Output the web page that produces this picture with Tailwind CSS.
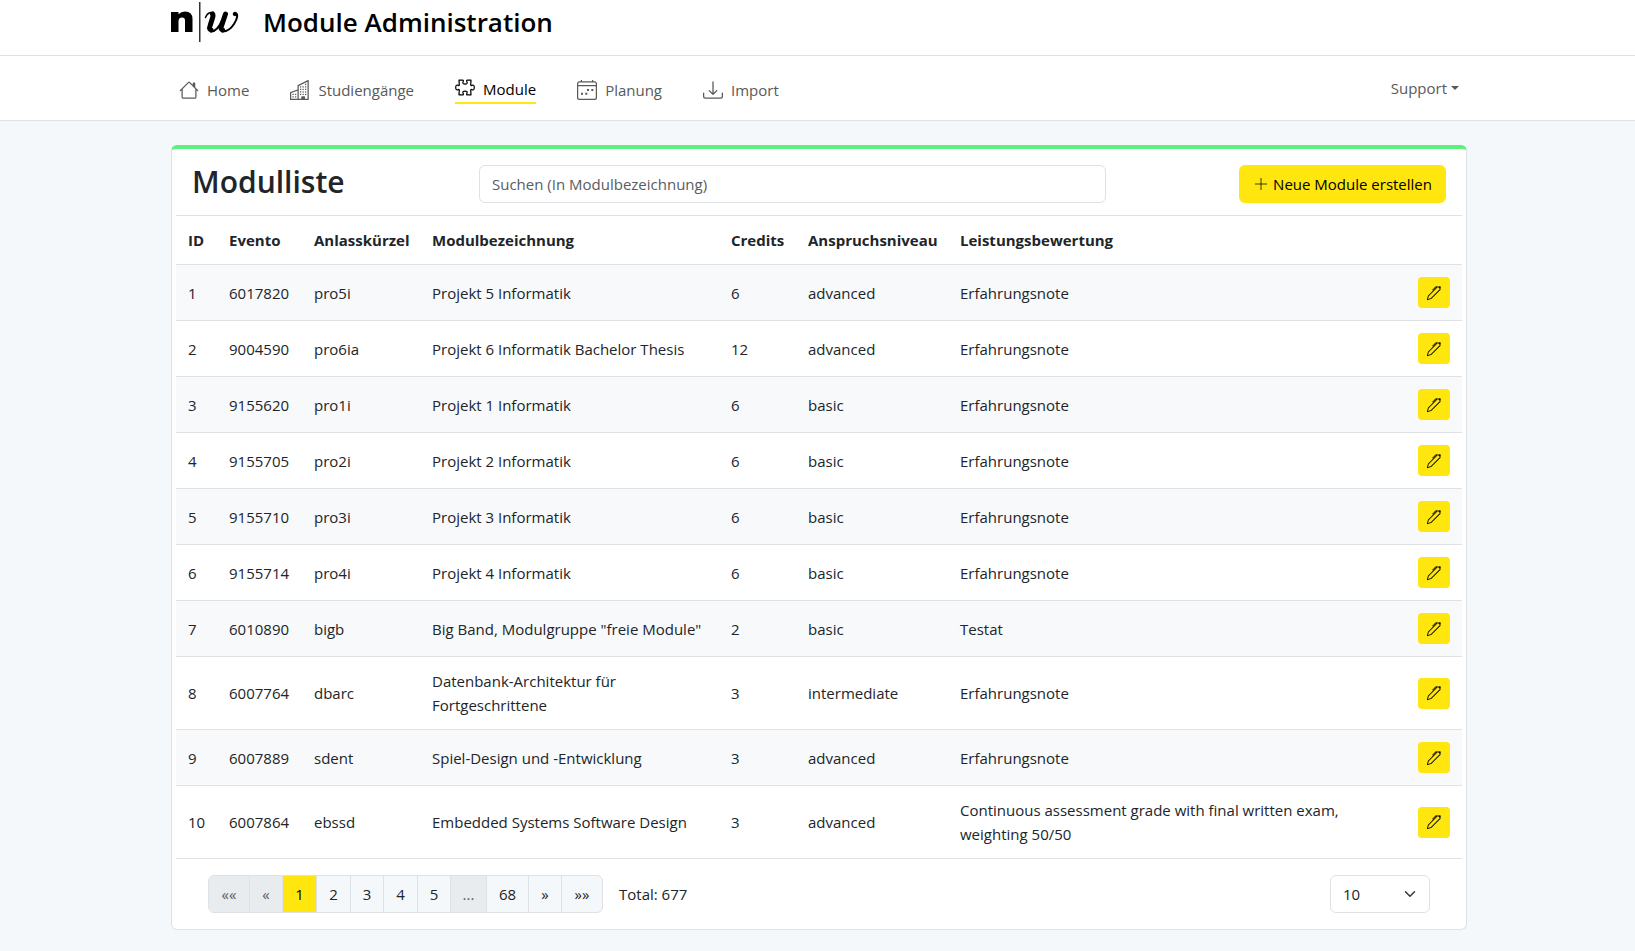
<!DOCTYPE html>
<html lang="de">
<head>
<meta charset="utf-8">
<meta name="viewport" content="width=device-width, initial-scale=1">
<title>Module Administration</title>
<script src="https://cdn.jsdelivr.net/npm/@tailwindcss/browser@4"></script>
</head>
<body class="min-h-screen bg-[#f4f8fb] font-['Segoe_UI','Open_Sans',sans-serif] text-[15px] leading-6 text-[#212529]">
<svg class="hidden" aria-hidden="true">
  <symbol id="pen" viewBox="0 0 16 16"><path d="m13.498.795.149-.149a1.207 1.207 0 1 1 1.707 1.708l-.149.148a1.5 1.5 0 0 1-.059 2.059L4.854 14.854a.5.5 0 0 1-.233.131l-4 1a.5.5 0 0 1-.606-.606l1-4a.5.5 0 0 1 .131-.232l9.642-9.642a.5.5 0 0 0-.642.056L6.854 4.854a.5.5 0 1 1-.708-.708L9.44.854A1.5 1.5 0 0 1 11.5.796a1.5 1.5 0 0 1 1.998-.001zm-.644.766a.5.5 0 0 0-.707 0L1.95 11.756l-.764 3.057 3.057-.764L14.44 3.854a.5.5 0 0 0 0-.708l-1.585-1.585z"/></symbol>
</svg>

<header class="border-b border-[#dee2e6] bg-white pl-[3px]">
  <div class="mx-auto flex h-[55px] max-w-[1296px] gap-6">
    <svg class="h-[42px] w-[68px] shrink-0" viewBox="0 0 68 42" role="img" aria-label="n|w">
      <path d="M0 12h7.500v2.300q2.500-2.700 6.500-2.700q7.500 0 7.500 7.500V32H14V20.500q0-3-3-3q-3.500 0-3.500 4V32H0z"/>
      <path d="M28 2h1.500v40H28z" fill="#333"/>
      <g fill="none" stroke="#000" stroke-linecap="round" stroke-linejoin="round">
        <path d="M34.500 17.500q2-5 6-5" stroke-width="1.500"/>
        <path d="M41.500 14q1 1.500 0 4l-2.500 8q-1.200 3.500 1 4" stroke-width="5"/>
        <path d="M40 31.500q6.500 0 11.500-12" stroke-width="2"/>
        <path d="m54.500 14-4 12q-1.200 3.500 1 4" stroke-width="5"/>
        <path d="M51.500 31.500q6.500.2 11.500-7.500 5.500-9 1.500-10.800" stroke-width="2"/>
        <circle cx="64" cy="14" r="1.800" fill="#000"/>
      </g>
    </svg>
    <h1 class="text-[26px] leading-[45px] font-semibold text-black">Module Administration</h1>
  </div>
</header>

<div class="border-b border-[#dee2e6] bg-white pl-[3px]">
  <nav class="mx-auto flex h-16 max-w-[1296px] items-start justify-between pr-2 pl-2 pt-5 text-[#595959]">
    <ul class="flex gap-[41px]">
      <li><a href="#" class="flex items-center gap-2 py-[2px]">
        <svg class="size-5" viewBox="0 0 16 16" fill="currentColor"><path d="M8.707 1.500a1 1 0 0 0-1.414 0L.646 8.146a.5.5 0 0 0 .708.708L2 8.207V13.500A1.500 1.500 0 0 0 3.500 15h9a1.500 1.500 0 0 0 1.500-1.500V8.207l.646.647a.5.5 0 0 0 .708-.708L13 5.793V2.500a.5.5 0 0 0-.5-.5h-1a.5.5 0 0 0-.5.5v1.293zM13 7.207V13.500a.5.5 0 0 1-.5.5h-9a.5.5 0 0 1-.5-.5V7.207l5-5z"/></svg>Home</a></li>
      <li><a href="#" class="flex items-center gap-2 py-[2px]">
        <svg class="size-5" viewBox="0 0 16 16" fill="currentColor"><path fill-rule="evenodd" d="M14.763.075A.5.5 0 0 1 15 .5v15a.5.5 0 0 1-.5.5h-14a.5.5 0 0 1-.5-.5V10a.5.5 0 0 1 .342-.474L6 7.640V4.500a.5.5 0 0 1 .276-.447l8-4a.5.5 0 0 1 .487.022M6 8.694 1 10.360V15h5zM7 15h2v-1.500a.5.5 0 0 1 .5-.5h2a.5.5 0 0 1 .5.5V15h2V1.309l-7 3.500z"/><path d="M2 11h1v1H2zm2 0h1v1H4zm-2 2h1v1H2zm2 0h1v1H4zm4-4h1v1H8zm2 0h1v1h-1zm-2 2h1v1H8zm2 0h1v1h-1zm2-2h1v1h-1zm0 2h1v1h-1zM8 7h1v1H8zm2 0h1v1h-1zm2 0h1v1h-1zM8 5h1v1H8zm2 0h1v1h-1zm2 0h1v1h-1zm0-2h1v1h-1z"/></svg>Studiengänge</a></li>
      <li><a href="#" aria-current="page" class="flex items-center gap-2 border-b-2 border-[#ffe60f] pt-px pb-px text-black">
        <svg class="size-5" viewBox="0 0 20 20" fill="none" stroke="currentColor" stroke-width="1.250" stroke-linejoin="round"><path d="M4 1.200h3.600q1 0 .7 1-.8 1.400-.3 2.100.6.700 2 .7t2-.7q.5-.7-.3-2.100-.3-1 .7-1H16L15.700 5.800q.1 1 1 .6 2.600-1.100 2.600 2.100t-2.600 2.100q-.9-.4-1 .6L16 15.800h-3.600q-1 0-.7-1 .8-1.400.3-2.100-.6-.7-2-.7t-2 .7q-.5.700.3 2.100.3 1-.7 1H4l.3-4.600q-.1-1-1-.6Q.7 11.700.7 8.500t2.600-2.100q.9.400 1-.6z"/></svg>Module</a></li>
      <li><a href="#" class="flex items-center gap-2 py-[2px]">
        <svg class="size-5" viewBox="0 0 20 20" fill="none" stroke="currentColor" stroke-width="1.250"><rect x=".6" y="1.900" width="18.800" height="17.500" rx="2"/><path d="M1 5.600h18M4.400 0v2M15.600 0v2"/><path d="M4 13.800h2m2.300 0h2M10 10h2m2.300 0h2" stroke-width="2"/></svg>Planung</a></li>
      <li><a href="#" class="flex items-center gap-2 py-[2px]">
        <svg class="size-5" viewBox="0 0 16 16" fill="currentColor"><path d="M.5 9.900a.5.5 0 0 1 .5.5v2.500a1 1 0 0 0 1 1h12a1 1 0 0 0 1-1v-2.500a.5.5 0 0 1 1 0v2.500a2 2 0 0 1-2 2H2a2 2 0 0 1-2-2v-2.500a.5.5 0 0 1 .5-.5"/><path d="M7.646 11.854a.5.5 0 0 0 .708 0l3-3a.5.5 0 0 0-.708-.708L8.500 10.293V1.500a.5.5 0 0 0-1 0v8.793L5.354 8.146a.5.5 0 1 0-.708.708z"/></svg>Import</a></li>
    </ul>
    <button type="button" class="flex items-center gap-1">Support<span class="border-x-4 border-t-4 border-x-transparent border-t-[#595959]"></span></button>
  </nav>
</div>

<main class="py-6 pl-[3px]">
  <section class="mx-auto max-w-[1296px] rounded-md border border-t-4 border-[#dee2e6] border-t-[#5cf07c] bg-white px-1">
    <div class="flex items-start pt-4 pr-4 pb-3 pl-4">
      <h2 class="w-[287px] shrink-0 text-[30px] leading-[34px] font-semibold">Modulliste</h2>
      <input type="search" aria-label="Suchen" placeholder="Suchen (In Modulbezeichnung)" class="h-[38px] w-1/2 rounded-md border border-[#dee2e6] bg-white px-3 placeholder:text-[#595c5f]">
      <button type="button" class="ml-auto flex h-[38px] items-center gap-1 rounded-md bg-[#ffe60f] px-[14px] whitespace-nowrap text-black">
        <svg class="size-4" viewBox="0 0 16 16" stroke="currentColor" stroke-opacity=".75"><path d="M2 8h12M8 2v12"/></svg>Neue Module erstellen</button>
    </div>
    <table class="w-full table-fixed border-t border-[#dee2e6] text-left">
      <colgroup><col class="w-[41px]"><col class="w-[85px]"><col class="w-[118px]"><col class="w-[299px]"><col class="w-[77px]"><col class="w-[152px]"><col><col class="w-[56px]"></colgroup>
      <thead>
        <tr class="h-[49px] border-b border-[#dee2e6] [&>th]:pl-3 [&>th]:font-bold [&>th]:whitespace-nowrap"><th>ID</th><th>Evento</th><th>Anlasskürzel</th><th>Modulbezeichnung</th><th>Credits</th><th>Anspruchsniveau</th><th>Leistungsbewertung</th><th aria-label="Bearbeiten"></th></tr>
      </thead>
      <tbody id="rows"></tbody>
    </table>
    <footer class="flex items-center justify-between pt-4 pr-8 pb-4 pl-8">
      <div class="flex items-center gap-4">
        <nav aria-label="Seiten" class="flex h-[38px] divide-x divide-[#dee2e6] overflow-hidden rounded-md border border-[#dee2e6] bg-[#f4f8fb]">
          <button type="button" disabled class="w-[41px] bg-[#e9ecef] text-[#595c5f]">««</button>
          <button type="button" disabled class="w-[33px] bg-[#e9ecef] text-[#595c5f]">«</button>
          <button type="button" aria-current="page" class="w-[34px] bg-[#ffe60f] text-black">1</button>
          <button type="button" class="w-[34px]">2</button>
          <button type="button" class="w-[33px]">3</button>
          <button type="button" class="w-[34px]">4</button>
          <button type="button" class="w-[33px]">5</button>
          <button type="button" disabled class="w-[36px] bg-[#e9ecef] text-[#595c5f]">...</button>
          <button type="button" class="w-[42px]">68</button>
          <button type="button" class="w-[33px]">»</button>
          <button type="button" class="w-10">»»</button>
        </nav>
        <span>Total: 677</span>
      </div>
      <div class="relative">
        <select aria-label="Einträge pro Seite" class="h-[38px] w-[100px] appearance-none rounded-md border border-[#dee2e6] bg-white px-3"><option>10</option><option>20</option><option>50</option></select>
        <svg class="pointer-events-none absolute top-[13px] right-3 h-3 w-4" viewBox="0 0 16 16" fill="none" stroke="#343a40" stroke-width="2" stroke-linecap="round" stroke-linejoin="round"><path d="m2 5 6 6 6-6"/></svg>
      </div>
    </footer>
  </section>
</main>

<script>
const modules = [
  ['1','6017820','pro5i','Projekt 5 Informatik','6','advanced','Erfahrungsnote'],
  ['2','9004590','pro6ia','Projekt 6 Informatik Bachelor Thesis','12','advanced','Erfahrungsnote'],
  ['3','9155620','pro1i','Projekt 1 Informatik','6','basic','Erfahrungsnote'],
  ['4','9155705','pro2i','Projekt 2 Informatik','6','basic','Erfahrungsnote'],
  ['5','9155710','pro3i','Projekt 3 Informatik','6','basic','Erfahrungsnote'],
  ['6','9155714','pro4i','Projekt 4 Informatik','6','basic','Erfahrungsnote'],
  ['7','6010890','bigb','Big Band, Modulgruppe "freie Module"','2','basic','Testat'],
  ['8','6007764','dbarc','Datenbank-Architektur für Fortgeschrittene','3','intermediate','Erfahrungsnote'],
  ['9','6007889','sdent','Spiel-Design und -Entwicklung','3','advanced','Erfahrungsnote'],
  ['10','6007864','ebssd','Embedded Systems Software Design','3','advanced','Continuous assessment grade with final written exam, weighting 50/50'],
];
document.getElementById('rows').innerHTML = modules.map(m => `
  <tr class="border-b border-[#dee2e6] odd:bg-[#f8f9fb]">
    ${m.map(v => `<td class="py-3 pl-3">${v}</td>`).join('')}
    <td class="px-3 py-3"><button type="button" aria-label="${m[3].replaceAll('"', '&quot;')} bearbeiten" class="flex h-[31px] w-8 items-center justify-center rounded-sm bg-[#ffe60f] text-black"><svg class="size-[14px]" fill="currentColor"><use href="#pen"/></svg></button></td>
  </tr>`).join('');
</script>
</body>
</html>
